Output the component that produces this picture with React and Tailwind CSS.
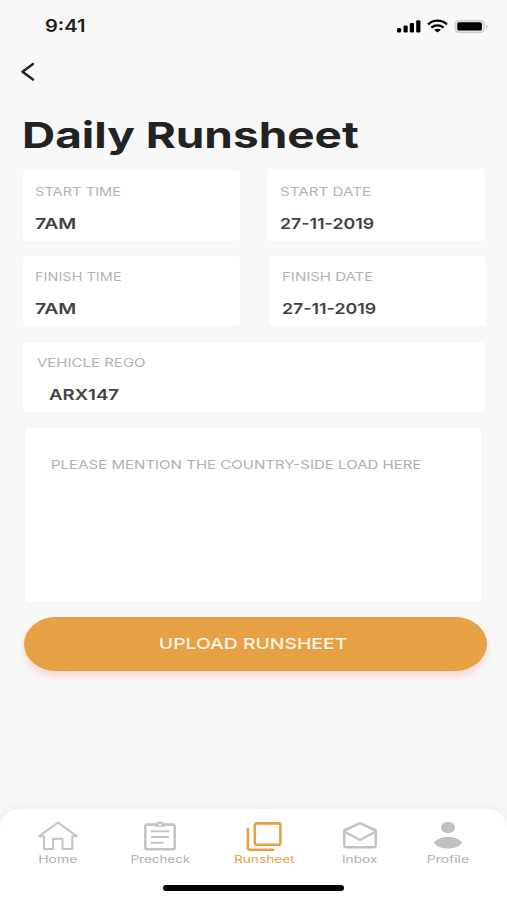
const StatusIcons = () => (
  <svg width="94" height="16" viewBox="0 0 94 16" className="absolute top-[18px] left-[395px]">
    <rect x="2" y="10" width="4.2" height="4.5" rx="1.5" />
    <rect x="8.5" y="7.6" width="4.2" height="6.9" rx="1.2" />
    <rect x="14.8" y="5" width="4.2" height="9.5" rx="1.2" />
    <rect x="21.2" y="2.3" width="4.2" height="12.2" rx="1.2" />
    <g fill="none" stroke="#000" strokeWidth="2.1">
      <path d="M33 6.4C38.5 1.4 46.5 1.4 52 6.4" />
      <path d="M36.4 9.6C40 6.6 45 6.6 48.6 9.6" />
    </g>
    <path d="M39 11.8Q42.5 9.5 46 11.8L42.5 14.5Z" />
    <rect x="60.2" y="2.4" width="29" height="12" rx="3.2" fill="#e4e4e4" stroke="#c8c8c8" strokeWidth="1" />
    <rect x="62.3" y="4.2" width="24.6" height="8.4" rx="1.6" />
    <path d="M91 6.5C93 7 93 10 91 10.5Z" fill="#bdbdbd" />
  </svg>
);

const HomeIcon = () => (
  <svg width="42" height="32" viewBox="0 0 42 32" fill="none" stroke="#c4c4c4" strokeWidth="2.1" strokeLinejoin="round">
    <path d="M21 2.5L2 16.3H7V29H16V18.8H25.5V29H35.3V16.3H40Z" />
  </svg>
);

const PrecheckIcon = () => (
  <svg width="34" height="32" viewBox="0 0 34 32" fill="none" stroke="#c4c4c4" strokeWidth="2.6">
    <rect x="2.3" y="4.6" width="29.4" height="24.6" rx="2" />
    <path d="M8 11.3H26M8 17H26M8 22.8H20.5" strokeWidth="2" />
    <path d="M11.5 5.2H22.5" strokeWidth="3.4" />
    <path d="M12.8 5Q13.5 1.5 17 1.5Q20.5 1.5 21.2 5Z" fill="#c4c4c4" stroke="none" />
    <circle cx="17" cy="4.6" r="1.1" fill="#fff" stroke="none" />
  </svg>
);

const RunsheetIcon = () => (
  <svg width="38" height="32" viewBox="0 0 38 32" fill="none" stroke="#e6a144" strokeWidth="2.6">
    <rect x="9.8" y="3.4" width="25.6" height="21.3" rx="1.8" />
    <path d="M2.9 8V27.6Q2.9 29.7 5 29.7H29.5" />
  </svg>
);

const InboxIcon = () => (
  <svg width="36" height="30" viewBox="0 0 36 30" fill="none" stroke="#c4c4c4" strokeWidth="2.5" strokeLinejoin="round">
    <path d="M2.2 9.5L18 2.2L33.8 9.5V24.6Q33.8 26.3 31.5 26.3H4.5Q2.2 26.3 2.2 24.6Z" />
    <path d="M2.2 10.5L18 19L33.8 10.5" />
  </svg>
);

const ProfileIcon = () => (
  <svg width="30" height="30" viewBox="0 0 30 30" fill="#c0c0c0">
    <ellipse cx="15" cy="6.5" rx="7" ry="5.8" />
    <path d="M1 21.5C6 14 24 14 29 21.5C25 29.5 5 29.5 1 21.5Z" />
  </svg>
);

const Field = ({ label, value, labelClass, valueClass, className }) => (
  <div className={`rounded-[4px] bg-white shadow-[0_0_6px_rgba(0,0,0,0.02)] ${className}`}>
    <div className={`w-max origin-left text-[12px] leading-[18px] text-[#b3b3b3] ${labelClass}`}>{label}</div>
    <div className={`mt-3.5 w-max origin-left text-[15px] leading-[18px] font-semibold text-[#424242] ${valueClass}`}>{value}</div>
  </div>
);

const NavItem = ({ icon, label, className, labelClass }) => (
  <div className={`flex flex-col items-center ${className}`}>
    <div className="flex h-[32px] items-center justify-center">{icon}</div>
    <span className={`text-[10.5px] leading-[15px] ${labelClass}`}>{label}</span>
  </div>
);

export default function App() {
  return (
    <div className="flex h-[900px] w-[507px] flex-col overflow-hidden bg-[#f8f8f8] font-['Inter',sans-serif]">
      <header className="relative h-[108px] shrink-0">
        <span className="absolute top-[16px] left-[45px] origin-left scale-x-[1.18] text-[17px] leading-[20px] font-semibold text-[#1c1c1c]">9:41</span>
        <StatusIcons />
        <svg width="16" height="20" viewBox="0 0 16 20" fill="none" stroke="#222" strokeWidth="2.4" strokeLinecap="round" strokeLinejoin="round" className="absolute top-[62px] left-[20px]">
          <path d="M13 2L2.5 9.8L13 17.5" />
        </svg>
      </header>

      <h1 className="ml-[21.5px] h-[62px] w-max origin-left scale-x-[1.275] text-[36px] leading-[54px] font-bold text-[#222]">Daily Runsheet</h1>

      <main className="flex flex-col">
        <div className="flex gap-[27px] pl-[23px]">
          <Field label="START TIME" value="7AM" className="h-[71px] w-[217px] pt-[13px] pl-3" labelClass="scale-x-[1.22]" valueClass="scale-x-[1.3]" />
          <Field label="START DATE" value="27-11-2019" className="h-[71px] w-[218px] pt-[13px] pl-[13px]" labelClass="scale-x-[1.265]" valueClass="scale-x-[1.185]" />
        </div>
        <div className="mt-[15px] flex gap-[29px] pl-[23px]">
          <Field label="FINISH TIME" value="7AM" className="h-[70px] w-[217px] pt-3 pl-3" labelClass="scale-x-[1.21]" valueClass="scale-x-[1.3]" />
          <Field label="FINISH DATE" value="27-11-2019" className="h-[70px] w-[217px] pt-3 pl-[13px]" labelClass="scale-x-[1.25]" valueClass="scale-x-[1.185]" />
        </div>
        <Field label="VEHICLE REGO" value="ARX147" className="mt-4 ml-[23px] h-[70px] w-[462px] pt-3 pl-3.5" labelClass="scale-x-[1.25]" valueClass="ml-3 scale-x-[1.24]" />
        <div className="mt-4 ml-[25px] h-[174px] w-[456px] rounded-[4px] bg-white pt-7 pl-[26px] shadow-[0_0_6px_rgba(0,0,0,0.02)]">
          <div className="w-max origin-left scale-x-[1.253] text-[12px] leading-[18px] text-[#b0b0b0]">PLEASE MENTION THE COUNTRY-SIDE LOAD HERE</div>
        </div>
        <button className="mt-[15px] ml-[24px] flex h-[54px] w-[463px] items-center justify-center rounded-[32px/27px] bg-[#e6a144] pr-[5px] shadow-[0_5px_7px_rgba(245,150,150,0.35)]">
          <span className="scale-x-[1.29] text-[15px] leading-[20px] font-medium text-[#fff7e8]">UPLOAD RUNSHEET</span>
        </button>
      </main>

      <nav className="mt-auto h-[91px] shrink-0 rounded-t-[20px] bg-white pt-[11px] shadow-[0_-4px_14px_rgba(0,0,0,0.04)]">
        <div className="flex pl-[18px]">
          <NavItem icon={<HomeIcon />} label="Home" className="w-[80px]" labelClass="scale-x-[1.33] text-[#b0b0b0]" />
          <NavItem icon={<PrecheckIcon />} label="Precheck" className="ml-[22px] w-[80px]" labelClass="scale-x-[1.28] text-[#b0b0b0]" />
          <NavItem icon={<RunsheetIcon />} label="Runsheet" className="ml-[24px] w-[80px]" labelClass="scale-x-[1.3] text-[#e6a144]" />
          <NavItem icon={<InboxIcon />} label="Inbox" className="ml-[16px] w-[80px]" labelClass="scale-x-[1.3] text-[#b0b0b0]" />
          <NavItem icon={<ProfileIcon />} label="Profile" className="ml-[8px] w-[80px]" labelClass="scale-x-[1.33] text-[#b0b0b0]" />
        </div>
        <div className="mt-[18px] ml-[163px] h-1.5 w-[181px] rounded-full bg-black" />
      </nav>
    </div>
  );
}
